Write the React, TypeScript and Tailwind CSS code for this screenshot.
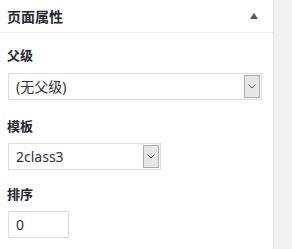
const font = { fontFamily: '"Noto Sans", "Noto Sans CJK SC", sans-serif' };

function Chevron() {
  return (
    <svg width="8" height="5" viewBox="0 0 8 5" fill="none">
      <path d="M0.5 0.5 L4 4 L7.5 0.5" stroke="#555" strokeWidth="1" />
    </svg>
  );
}

function FakeSelect({ value, width }: { value: string; width: string }) {
  return (
    <div
      className={`flex h-[27px] items-stretch border border-[#dcdcdc] bg-white ${width}`}
    >
      <div className="flex flex-1 items-center pl-[7px] text-[14px] text-[#333]">
        {value}
      </div>
      <div className="m-px flex w-[16px] items-center justify-center border border-[#acacac] bg-[#e6e6e6]">
        <Chevron />
      </div>
    </div>
  );
}

export default function App() {
  return (
    <div className="flex h-[249px] w-[292px] bg-[#f1f1f1]" style={font}>
      <div className="w-[274px] border-r border-[#e5e5e5] bg-white">
        <div className="flex h-[33px] items-center justify-between border-b border-[#eeeeee] pl-[7px] pr-[15px]">
          <span className="text-[14px] font-bold text-[#23282d]">页面属性</span>
          <span className="h-0 w-0 border-x-[4px] border-b-[6px] border-x-transparent border-b-[#555]" />
        </div>
        <div className="px-[8px]">
          <div className="mt-[12px] h-[20px] text-[13px] font-bold leading-[20px] text-[#23282d] -ml-px">
            父级
          </div>
          <div className="mt-[8px]">
            <FakeSelect value="(无父级)" width="w-[254px]" />
          </div>
          <div className="mt-[16px] h-[20px] text-[13px] font-bold leading-[20px] text-[#23282d] -ml-px">
            模板
          </div>
          <div className="mt-[7px]">
            <FakeSelect value="2class3" width="w-[153px]" />
          </div>
          <div className="mt-[14px] h-[20px] text-[13px] font-bold leading-[20px] text-[#23282d] -ml-px">
            排序
          </div>
          <div className="mt-[7px] flex h-[27px] w-[61px] items-center border border-[#dcdcdc] pl-[7px] text-[14px] text-[#333]">
            0
          </div>
        </div>
      </div>
    </div>
  );
}
